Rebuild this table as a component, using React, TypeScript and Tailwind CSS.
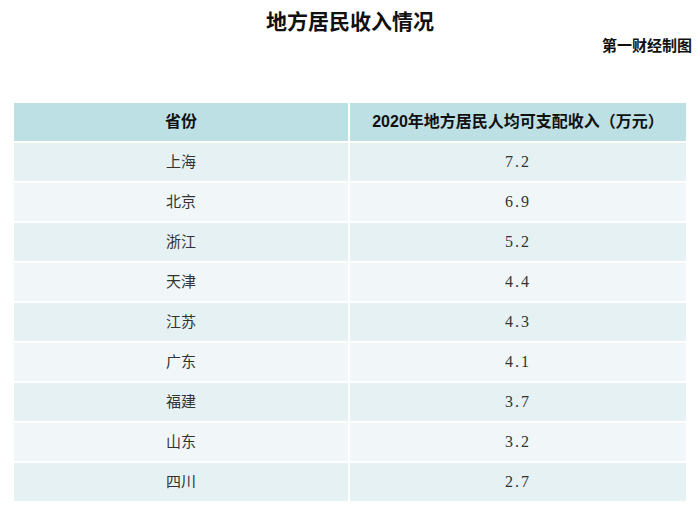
const rows: [string, string][] = [
  ["上海", "7.2"],
  ["北京", "6.9"],
  ["浙江", "5.2"],
  ["天津", "4.4"],
  ["江苏", "4.3"],
  ["广东", "4.1"],
  ["福建", "3.7"],
  ["山东", "3.2"],
  ["四川", "2.7"],
];

const cjk = { fontFamily: '"Liberation Sans", "Noto Sans CJK SC", sans-serif' };

export default function App() {
  return (
    <div className="w-[700px] h-[510px] bg-white text-[#222]" style={cjk}>
      <h1 className="pt-[9px] text-center text-[21px] leading-[26px] font-bold text-[#111]">
        地方居民收入情况
      </h1>
      <div className="mt-[1px] pr-[8px] text-right text-[15px] leading-[20px] font-bold text-[#111]">
        第一财经制图
      </div>
      <table className="mt-[45px] ml-[12px] w-[676px] table-fixed border-separate border-spacing-[2px]">
        <colgroup>
          <col className="w-[334px]" />
          <col className="w-[336px]" />
        </colgroup>
        <thead>
          <tr className="h-[38px] bg-[#bde0e4]">
            <th className="text-[16px] font-bold text-[#111]">省份</th>
            <th className="text-[16px] font-bold text-[#111]">2020年地方居民人均可支配收入（万元）</th>
          </tr>
        </thead>
        <tbody>
          {rows.map(([name, value], i) => (
            <tr key={name} className={`h-[38px] ${i % 2 === 0 ? "bg-[#e5f1f3]" : "bg-[#f1f7f9]"}`}>
              <td className="text-center text-[15px] text-[#333]">{name}</td>
              <td
                className="text-center text-[16px] tracking-[2px] text-[#333]"
                style={{ fontFamily: '"Liberation Serif", serif' }}
              >
                {value}
              </td>
            </tr>
          ))}
        </tbody>
      </table>
    </div>
  );
}
